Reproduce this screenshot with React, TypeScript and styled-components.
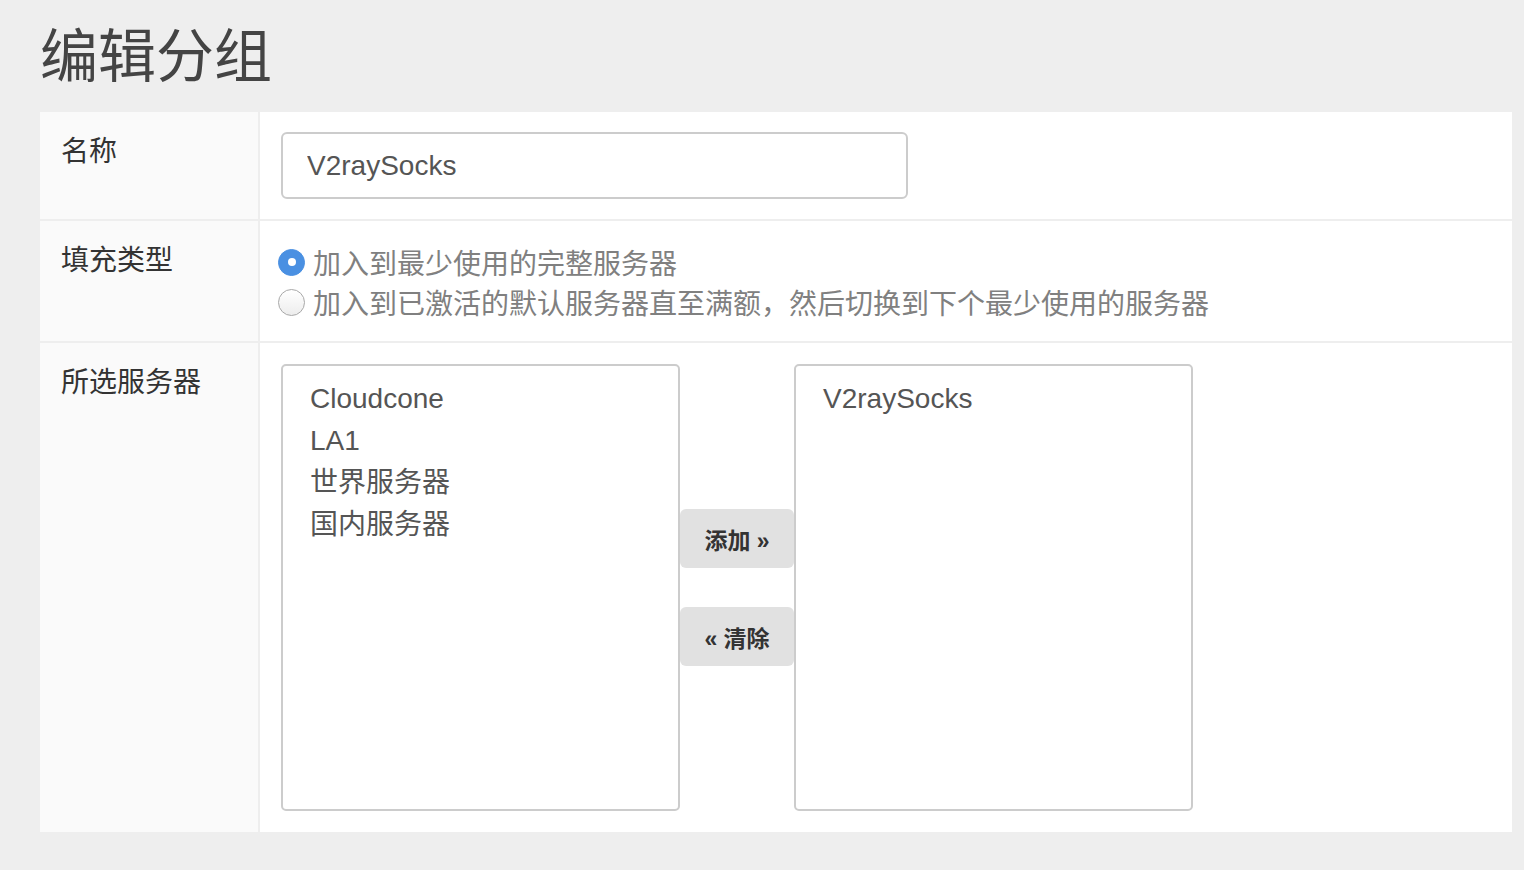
import * as React from "react";
import styled, { createGlobalStyle } from "styled-components";

const FONT = `"Liberation Sans", "Noto Sans CJK SC", sans-serif`;

const GlobalStyle = createGlobalStyle`
  html, body {
    margin: 0;
    padding: 0;
    background: #eeeeee;
    font-family: ${FONT};
  }
`;

const Page = styled.div`
  padding: 28px 12px 38px 40px;
`;

const Title = styled.h1`
  margin: 0 0 26px;
  font-size: 58px;
  line-height: 58px;
  font-weight: normal;
  color: #444;
`;

const Table = styled.div`
  background: #fff;
`;

const Row = styled.div<{ $last?: boolean }>`
  display: grid;
  grid-template-columns: 220px 1fr;
  border-bottom: ${(p) => (p.$last ? "none" : "2px solid #eeeeee")};
`;

const Label = styled.div`
  background: #fafafa;
  border-right: 2px solid #eeeeee;
  padding: 20px 0 0 21px;
  font-size: 28px;
  line-height: 40px;
  color: #333;
`;

const Value = styled.div<{ $pad?: string }>`
  padding: ${(p) => p.$pad || "20px 21px"};
`;

const TextInput = styled.input`
  box-sizing: border-box;
  width: 627px;
  height: 67px;
  border: 2px solid #cccccc;
  border-radius: 6px;
  padding: 0 24px;
  font-family: ${FONT};
  font-size: 28px;
  color: #555;
  outline: none;
`;

const RadioLine = styled.label`
  display: flex;
  align-items: center;
  height: 40px;
  font-size: 28px;
  color: #808080;
  cursor: pointer;
`;

const RadioDot = styled.span<{ $checked?: boolean }>`
  box-sizing: border-box;
  width: 27px;
  height: 27px;
  border-radius: 50%;
  margin: 0 8px 0 -3px;
  flex-shrink: 0;
  display: flex;
  align-items: center;
  justify-content: center;
  background: ${(p) =>
    p.$checked ? "#4a90e2" : "linear-gradient(#ffffff, #ededed)"};
  border: 1px solid ${(p) => (p.$checked ? "#4a90e2" : "#a8a8a8")};

  &::after {
    content: "";
    display: ${(p) => (p.$checked ? "block" : "none")};
    width: 8px;
    height: 8px;
    border-radius: 50%;
    background: #fff;
  }
`;

const Picker = styled.div`
  display: flex;
  align-items: center;
`;

const ListBox = styled.div`
  box-sizing: border-box;
  width: 399px;
  height: 447px;
  border: 2px solid #cccccc;
  border-radius: 5px;
  padding: 12px 27px;
  background: #fff;
`;

const ListItem = styled.div`
  font-size: 28px;
  line-height: 42px;
  color: #555;
  white-space: nowrap;
`;

const Middle = styled.div`
  width: 114px;
  display: flex;
  flex-direction: column;
  gap: 39px;
`;

const MoveButton = styled.button`
  height: 59px;
  border: none;
  border-radius: 6px;
  background: #e1e1e1;
  font-family: ${FONT};
  font-size: 23px;
  font-weight: bold;
  color: #333;
  padding: 0;
  cursor: pointer;
`;

export default function App() {
  const [fill, setFill] = React.useState(0);
  const left = ["Cloudcone", "LA1", "世界服务器", "国内服务器"];
  const right = ["V2raySocks"];

  return (
    <Page>
      <GlobalStyle />
      <Title>编辑分组</Title>
      <Table>
        <Row>
          <Label>名称</Label>
          <Value>
            <TextInput defaultValue="V2raySocks" />
          </Value>
        </Row>
        <Row>
          <Label>填充类型</Label>
          <Value $pad="21px 21px 19px">
            <RadioLine onClick={() => setFill(0)}>
              <RadioDot $checked={fill === 0} />
              加入到最少使用的完整服务器
            </RadioLine>
            <RadioLine onClick={() => setFill(1)}>
              <RadioDot $checked={fill === 1} />
              加入到已激活的默认服务器直至满额，然后切换到下个最少使用的服务器
            </RadioLine>
          </Value>
        </Row>
        <Row $last>
          <Label>所选服务器</Label>
          <Value $pad="21px 21px">
            <Picker>
              <ListBox>
                {left.map((s) => (
                  <ListItem key={s}>{s}</ListItem>
                ))}
              </ListBox>
              <Middle>
                <MoveButton>添加 »</MoveButton>
                <MoveButton>« 清除</MoveButton>
              </Middle>
              <ListBox>
                {right.map((s) => (
                  <ListItem key={s}>{s}</ListItem>
                ))}
              </ListBox>
            </Picker>
          </Value>
        </Row>
      </Table>
    </Page>
  );
}
